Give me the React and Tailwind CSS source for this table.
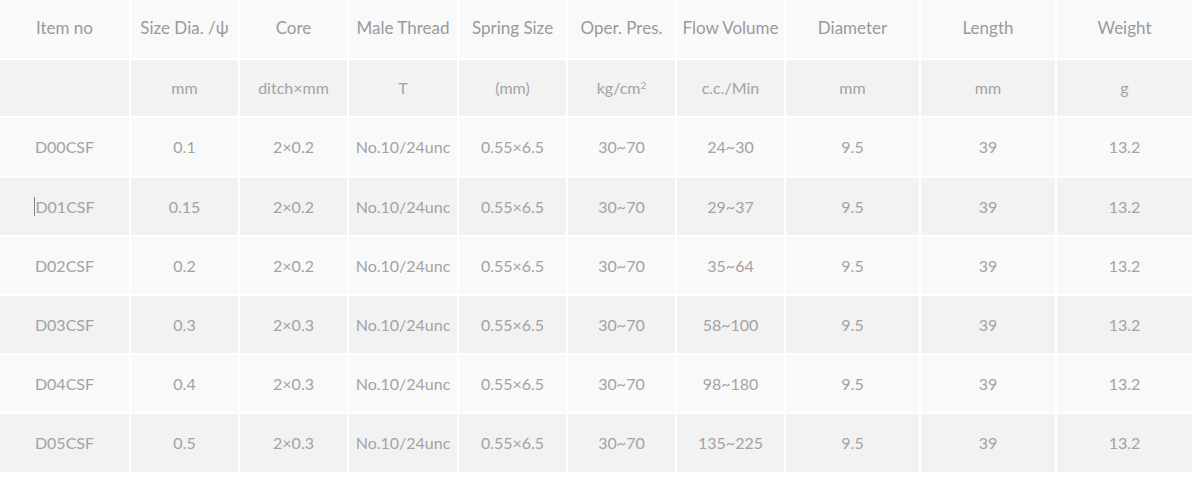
import React from "react";

const headers = [
  "Item no",
  "Size Dia. /ψ",
  "Core",
  "Male Thread",
  "Spring Size",
  "Oper. Pres.",
  "Flow Volume",
  "Diameter",
  "Length",
  "Weight",
];

const units = ["", "mm", "ditch×mm", "T", "(mm)", "kg/cm²", "c.c./Min", "mm", "mm", "g"];

const rows = [
  ["D00CSF", "0.1", "2×0.2", "No.10/24unc", "0.55×6.5", "30~70", "24~30", "9.5", "39", "13.2"],
  ["D01CSF", "0.15", "2×0.2", "No.10/24unc", "0.55×6.5", "30~70", "29~37", "9.5", "39", "13.2"],
  ["D02CSF", "0.2", "2×0.2", "No.10/24unc", "0.55×6.5", "30~70", "35~64", "9.5", "39", "13.2"],
  ["D03CSF", "0.3", "2×0.3", "No.10/24unc", "0.55×6.5", "30~70", "58~100", "9.5", "39", "13.2"],
  ["D04CSF", "0.4", "2×0.3", "No.10/24unc", "0.55×6.5", "30~70", "98~180", "9.5", "39", "13.2"],
  ["D05CSF", "0.5", "2×0.3", "No.10/24unc", "0.55×6.5", "30~70", "135~225", "9.5", "39", "13.2"],
];

const rowHeights = ["h-[58px]", "h-[57px]", "h-[57px]", "h-[57px]", "h-[57px]", "h-[58px]"];

const App = () => {
  return (
    <div className="w-[1198px] h-[477px] bg-white font-['Lato','Open_Sans',sans-serif]">
      <div className="w-[1192px] grid grid-cols-[129px_107px_107px_108px_107px_107px_107px_133px_134px_135px] gap-[2px] bg-white">
        {/* header row */}
        {headers.map((h) => (
          <div
            key={h}
            className="h-[58px] bg-[#f9f9f9] flex items-center justify-center pb-[2px] text-[17px] text-[#9a9a9a] whitespace-nowrap"
          >
            {h}
          </div>
        ))}
        {/* units row */}
        {units.map((u, i) => (
          <div
            key={"u" + i}
            className="h-[56px] bg-[#f2f2f2] flex items-center justify-center text-[16px] text-[#a3a3a3] whitespace-nowrap"
          >
            {u === "kg/cm²" ? (
              <span>
                kg/cm<sup className="text-[10px]">2</sup>
              </span>
            ) : (
              u
            )}
          </div>
        ))}
        {/* data rows */}
        {rows.map((r, ri) =>
          r.map((c, ci) => (
            <div
              key={ri + "-" + ci}
              className={
                rowHeights[ri] +
                " flex items-center justify-center text-[16px] text-[#a3a3a3] whitespace-nowrap " +
                (ri % 2 === 0 ? "bg-[#f9f9f9]" : "bg-[#f2f2f2]")
              }
            >
              {ri === 1 && ci === 0 ? (
                <span className="flex items-center">
                  <span className="w-px h-[19px] bg-[#808080]" />
                  {c}
                </span>
              ) : (
                c
              )}
            </div>
          ))
        )}
      </div>
    </div>
  );
};

export default App;
